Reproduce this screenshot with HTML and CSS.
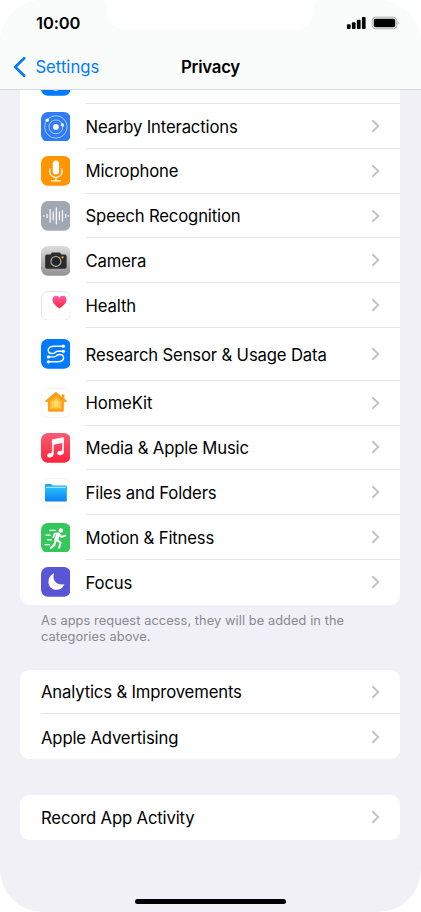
FILE: index.html
```html
<!DOCTYPE html>
<html lang="en">
<head>
<meta charset="utf-8">
<title>Privacy</title>
<link rel="stylesheet" href="styles.css">
</head>
<body>
<svg class="defs" aria-hidden="true">
  <defs>
    <linearGradient id="cam" x2="0" y2="1"><stop stop-color="#dcdcdd"/><stop offset="1" stop-color="#929296"/></linearGradient>
    <linearGradient id="heart" x2="0" y2="1"><stop stop-color="#ff5bac"/><stop offset="1" stop-color="#ff2338"/></linearGradient>
    <linearGradient id="music" x2="0" y2="1"><stop stop-color="#fb5c74"/><stop offset="1" stop-color="#fa233b"/></linearGradient>
    <linearGradient id="folder" x2="0" y2="1"><stop stop-color="#29bdfb"/><stop offset="1" stop-color="#0c80f5"/></linearGradient>
    <symbol id="chev" viewBox="0 0 9 14"><path d="M1.3 1.3 7.3 7 1.3 12.7" fill="none" stroke="#c2c2c5" stroke-width="1.9"/></symbol>
  </defs>
</svg>
<div class="phone">
  <header class="top">
    <svg class="notch" viewBox="0 0 221 31"><path d="M0 0C6 0 7.5 4 7.5 10 7.5 23 15 30 28 30H193C206 30 213.500 23 213.500 10 213.500 4 215 0 221 0Z" fill="#fff"/></svg>
    <div class="status">
      <span class="time">10:00</span>
      <svg class="signals" width="53" height="14" viewBox="0 0 53 14">
        <g fill="#000"><rect x=".9" y="8.200" width="3.700" height="4.800" rx="1"/><rect x="5.900" y="6.300" width="3.700" height="6.700" rx="1"/><rect x="10.900" y="3.800" width="3.700" height="9.200" rx="1"/><rect x="15.900" y="1" width="3.700" height="12" rx="1"/><rect x="27.800" y="2.700" width="21.400" height="8.600" rx="1.800"/></g>
        <rect x="26.300" y="1.200" width="24.400" height="11.600" rx="3.200" fill="none" stroke="#a9abaa"/>
        <path d="M51.800 5.200v3.600q1.200-.5 1.200-1.800t-1.200-1.800" fill="#a9abaa"/>
      </svg>
    </div>
    <nav class="nav">
      <a class="back"><svg width="13" height="20" viewBox="0 0 13 20"><path d="M11.200 1.200 2.200 10l9 8.800" fill="none" stroke="#007aff" stroke-width="2.600" stroke-linecap="round" stroke-linejoin="round"/></svg><span>Settings</span></a>
      <h1>Privacy</h1>
    </nav>
  </header>
  <main>
    <section class="card first">
      <div class="row peek">
        <svg class="icon" viewBox="0 0 30 30"><rect width="30" height="30" rx="7" fill="#007aff"/><ellipse cx="15" cy="21" rx="5" ry="4" fill="#fff"/></svg>
        <div class="cell"></div>
      </div>
      <div class="row">
        <svg class="icon" viewBox="0 0 30 30"><rect width="30" height="30" rx="7" fill="#2f7cf6"/><g fill="none" stroke="#a9cbff" stroke-width="1"><circle cx="15" cy="15" r="11.300"/><circle cx="15" cy="15" r="7"/></g><g fill="#fff"><circle cx="15" cy="15" r="2.900"/><circle cx="21.500" cy="13" r="1.600"/><circle cx="6.200" cy="8.200" r="1.700"/></g></svg>
        <div class="cell"><span>Nearby Interactions</span><svg class="chev"><use href="#chev"/></svg></div>
      </div>
      <div class="row">
        <svg class="icon" viewBox="0 0 30 30"><rect width="30" height="30" rx="7" fill="#ff9500"/><rect x="11.800" y="4.500" width="6.400" height="14" rx="3.200" fill="#fff"/><path d="M8.800 13v2.500a6.200 6 0 0 0 12.400 0V13M15 21.500v3.300M10.500 25h9" fill="none" stroke="#fff" stroke-width="1.300" stroke-linecap="round"/></svg>
        <div class="cell"><span>Microphone</span><svg class="chev"><use href="#chev"/></svg></div>
      </div>
      <div class="row">
        <svg class="icon" viewBox="0 0 30 30"><rect width="30" height="30" rx="7" fill="#a2a7b5"/><path d="M2.900 14.700v.6M6.100 13.500v3M9.200 8.500v13M12.300 11v8M15.400 7v16M18.500 11v8M21.600 9.500v11M24.700 13.500v3M27.500 14.700v.6" stroke="#fff" stroke-width="1.200" stroke-linecap="round"/></svg>
        <div class="cell"><span>Speech Recognition</span><svg class="chev"><use href="#chev"/></svg></div>
      </div>
      <div class="row">
        <svg class="icon" viewBox="0 0 30 30"><rect width="30" height="30" rx="7" fill="url(#cam)"/><path d="M6 8.500h3.500l1.500-2h8l1.500 2H24a1.800 1.800 0 0 1 1.800 1.800v10.900A1.800 1.800 0 0 1 24 23H6a1.800 1.800 0 0 1-1.800-1.800V10.300A1.800 1.800 0 0 1 6 8.500Z" fill="#2c2c2c"/><circle cx="15" cy="15.500" r="5" fill="#242526" stroke="#b4b4b4" stroke-width="1.100"/><circle cx="21.700" cy="11.400" r="1.100" fill="#f6b419"/></svg>
        <div class="cell"><span>Camera</span><svg class="chev"><use href="#chev"/></svg></div>
      </div>
      <div class="row">
        <svg class="icon" viewBox="0 0 30 30"><rect x=".5" y=".5" width="29" height="29" rx="6.500" fill="#fff" stroke="#e5e5e7"/><path d="M18.600 17.600C14 14.300 11.500 12 11.500 8.800 11.500 6.400 13.200 4.800 15.200 4.800 16.700 4.800 17.900 5.500 18.600 6.800 19.300 5.500 20.500 4.800 22 4.800 24 4.800 25.700 6.400 25.700 8.800 25.700 12 23.200 14.300 18.600 17.600Z" fill="url(#heart)"/></svg>
        <div class="cell"><span>Health</span><svg class="chev"><use href="#chev"/></svg></div>
      </div>
      <div class="row tall">
        <svg class="icon" viewBox="0 0 30 30"><rect width="30" height="30" rx="7" fill="#007aff"/><g fill="none" stroke="#fff" stroke-width="1.500"><path d="M22.500 7.200H13.500Q7.300 7.200 7.300 11.200 7.300 14.700 11 14.700 13.200 14.700 14.200 13.600 15.200 12.400 17.500 12.400H22.500M7.500 23H16.500Q22.700 23 22.700 19 22.700 15.500 19 15.500 16.800 15.500 15.800 16.700 14.800 18 12.500 18H7.500"/></g><g fill="#fff"><circle cx="22.500" cy="7.200" r="1.700"/><circle cx="22.500" cy="12.400" r="1.700"/><circle cx="7.500" cy="18" r="1.700"/><circle cx="7.500" cy="23" r="1.700"/></g></svg>
        <div class="cell"><span>Research Sensor &amp; Usage Data</span><svg class="chev"><use href="#chev"/></svg></div>
      </div>
      <div class="row">
        <svg class="icon" viewBox="0 0 30 30"><rect x=".5" y=".5" width="29" height="29" rx="6.500" fill="#fff" stroke="#f4f4f5"/><path d="M15 3.800 4.500 12.500V14H7v8.600Q7 24 8.400 24H21.600Q23 24 23 22.600V14H25.700V12.500L23.600 10.700V6.500H21V8.700Z" fill="#fe9d18"/><path d="M15 8 9 13V21.500H21V13Z" fill="#ffb52e"/><path d="m15 10.500-4.300 3.500v6h8.600v-6Z" fill="#ffd04e"/><path d="m15 13-2 1.700V18h4v-3.300Z" fill="#ffe274"/></svg>
        <div class="cell"><span>HomeKit</span><svg class="chev"><use href="#chev"/></svg></div>
      </div>
      <div class="row">
        <svg class="icon" viewBox="0 0 30 30"><rect width="30" height="30" rx="7" fill="url(#music)"/><path d="M11 6.500 22 4.200Q23 4 23 5V18.800Q23 22 19.300 22.300C15.500 22.600 15.500 18.800 18.500 18.200L20.500 17.800Q21.300 17.600 21.300 16.800V10L12.700 11.800V21Q12.700 24.200 9.200 24.600C5.300 25 5.300 21.100 8.400 20.500L10 20.200Q11 20 11 19Z" fill="#fff"/></svg>
        <div class="cell"><span>Media &amp; Apple Music</span><svg class="chev"><use href="#chev"/></svg></div>
      </div>
      <div class="row">
        <svg class="icon" viewBox="0 0 30 30"><rect x=".5" y=".5" width="29" height="29" rx="6.500" fill="#fff" stroke="#f4f4f5"/><path d="M4 7.500Q4 6 5.500 6H10L11.800 7.500H24.500Q26 7.500 26 9V12H4Z" fill="#16a5e8"/><path d="M5 8.600H25V11H5Z" fill="#9de2fb"/><path d="M4 10H26V22.300Q26 23.700 24.600 23.700H5.400Q4 23.700 4 22.300Z" fill="url(#folder)"/></svg>
        <div class="cell"><span>Files and Folders</span><svg class="chev"><use href="#chev"/></svg></div>
      </div>
      <div class="row">
        <svg class="icon" viewBox="0 0 30 30"><rect width="30" height="30" rx="7" fill="#34c759"/><circle cx="20" cy="7.500" r="2.200" fill="#fff"/><g fill="none" stroke="#fff" stroke-linecap="round" stroke-linejoin="round"><path d="M17.200 11.800 15.400 16.500" stroke-width="4"/><path d="M12.400 14.200 13.800 10.700 18 10.500 20.500 14 24.600 12.700" stroke-width="1.700"/><path d="M15.800 17 19.700 19.700 18.300 24.800M14.500 18 13.500 22 10 25" stroke-width="2.100"/><path d="M9 7.500H14.200M5 12.200H9.500M6.500 16.900H10.500M4 21.700H8.700" stroke-width="1.200"/></g></svg>
        <div class="cell"><span>Motion &amp; Fitness</span><svg class="chev"><use href="#chev"/></svg></div>
      </div>
      <div class="row">
        <svg class="icon" viewBox="0 0 30 30"><rect width="30" height="30" rx="7" fill="#5856d6"/><path d="M13 6.800C11.200 12.500 14.800 18.800 23 17.500Q23.600 17.400 23.300 18C21.700 21.200 18.800 22.900 15.500 22.900 11 22.900 7.500 19.500 7.500 15 7.500 11.300 9.500 8 12.500 6.500Q13.200 6.200 13 6.800Z" fill="#fff"/></svg>
        <div class="cell"><span>Focus</span><svg class="chev"><use href="#chev"/></svg></div>
      </div>
    </section>
    <p class="note">As apps request access, they will be added in the categories above.</p>
    <section class="card links">
      <div class="row"><div class="cell"><span>Analytics &amp; Improvements</span><svg class="chev"><use href="#chev"/></svg></div></div>
      <div class="row"><div class="cell"><span>Apple Advertising</span><svg class="chev"><use href="#chev"/></svg></div></div>
    </section>
    <section class="card record">
      <div class="row"><div class="cell"><span>Record App Activity</span><svg class="chev"><use href="#chev"/></svg></div></div>
    </section>
  </main>
  <div class="home"></div>
</div>
</body>
</html>
```
FILE: styles.css
```css
* { box-sizing: border-box; }
body { margin: 0; background: #fff; font-family: Inter, "Liberation Sans", sans-serif; color: #000; }
.defs { position: absolute; width: 0; height: 0; }
.phone { position: relative; width: 421px; height: 912px; overflow: hidden; border-radius: 43px; background: #f1f0f6; display: flex; flex-direction: column; }
.top { position: relative; flex: none; height: 90px; background: #fafcfb; border-bottom: 1px solid #d8dada; }
.notch { position: absolute; left: 100px; top: 0; width: 221px; height: 31px; }
.status { height: 45px; padding: 0 22px 0 36px; display: flex; justify-content: space-between; align-items: center; }
.time { font-size: 16.500px; font-weight: 600; letter-spacing: -.1px; }
.nav { display: grid; grid-template-columns: 1fr auto 1fr; align-items: center; height: 44px; padding-left: 13px; }
.back { display: flex; align-items: center; gap: 9.400px; color: #007aff; font-size: 16.700px; letter-spacing: 0; }
h1 { margin: 0 13px 0 0; font-size: 16.800px; font-weight: 600; letter-spacing: -.25px; }
.card { margin: 0 20.600px 0 20.300px; background: #fff; border-radius: 9px; overflow: hidden; }
.first { border-radius: 0 0 9px 9px; }
.row { display: flex; height: 44.780px; align-items: center; padding-left: 20.300px; }
.tall { height: 52.900px; }
.peek { height: 14.100px; align-items: flex-end; }
.peek .icon { margin-bottom: 7.900px; }
.icon { flex: none; width: 29.800px; height: 29.800px; margin-right: 15.200px; }
.cell { flex: 1; height: 100%; display: flex; align-items: center; justify-content: space-between; padding-right: 20.300px; border-bottom: 1px solid #e5e5e8; font-size: 16.700px; letter-spacing: -.16px; white-space: nowrap; }
.cell span { padding-top: 1.500px; }
.row:last-child .cell { border-bottom: 0; }
.links .row, .record .row { padding-left: 20.700px; }
.chev { width: 9px; height: 14px; }
.note { margin: 8px 41px 0; font-size: 12.800px; line-height: 16px; letter-spacing: .08px; color: #88888d; }
.links { margin-top: 25px; }
.record { margin-top: 35.700px; }
.home { position: absolute; left: 135px; bottom: 8px; width: 151px; height: 5.500px; border-radius: 3px; background: #000; }
```
